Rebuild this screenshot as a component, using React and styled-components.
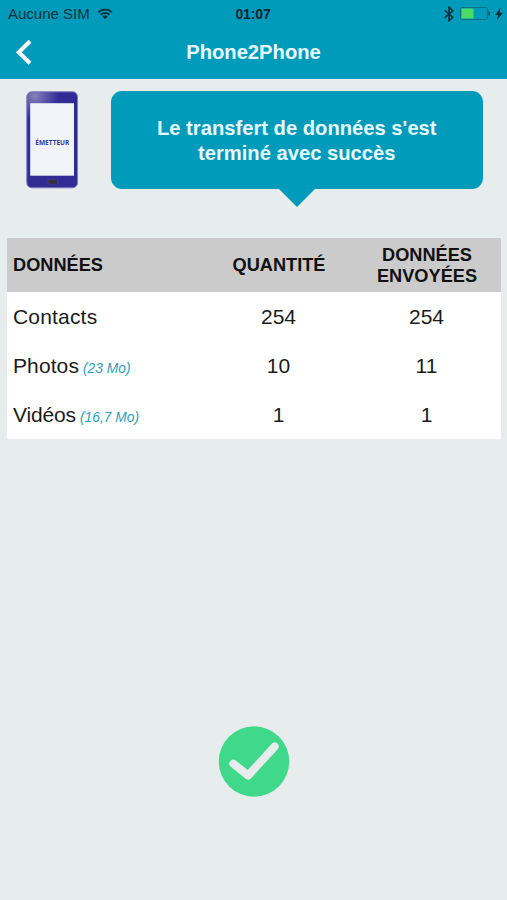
import React from 'react';
import styled, { createGlobalStyle } from 'styled-components';

const GlobalStyle = createGlobalStyle`
  body {
    margin: 0;
    background-color: #e7eded;
    font-family: "Liberation Sans", Arial, sans-serif;
  }
`;

const Screen = styled.div`
  display: flex;
  flex-direction: column;
  height: 900px;
  overflow: hidden;
`;

const Header = styled.header`
  height: 79px;
  background-color: #009bbb;
`;

const StatusBar = styled.div`
  display: grid;
  grid-template-columns: 1fr auto 1fr;
  align-items: center;
  height: 27px;
  padding: 0 5px 0 8px;
  color: #06333f;
`;

const Carrier = styled.div`
  display: flex;
  align-items: center;
  gap: 7px;
  font-size: 15px;
`;

const Clock = styled.div`
  margin-right: 4px;
  color: #052833;
  font-size: 14px;
  font-weight: bold;
  letter-spacing: -0.15px;
`;

const StatusIcons = styled.div`
  display: flex;
  align-items: center;
  justify-content: flex-end;
  gap: 6px;
`;

const NavBar = styled.div`
  display: grid;
  grid-template-columns: 48px 1fr 48px;
  align-items: center;
  height: 50px;
`;

const BackButton = styled.button`
  display: flex;
  padding: 0 0 0 15px;
  border: none;
  background: none;
`;

const Title = styled.h1`
  margin: 0;
  color: #e6fafe;
  font-size: 20.2px;
  line-height: 24px;
  text-align: center;
`;

const Summary = styled.section`
  display: flex;
  padding: 12px 24px 0 26px;
  height: 147px;
`;

const PhoneDrawing = styled.svg`
  width: 52px;
  height: 98px;
  margin-right: 32.5px;
`;

const BubbleColumn = styled.div`
  display: flex;
  flex: 1;
  flex-direction: column;
  align-items: center;
`;

const Bubble = styled.div`
  display: flex;
  align-items: center;
  justify-content: center;
  width: 100%;
  height: 98px;
  padding-top: 2px;
  box-sizing: border-box;
  border-radius: 11px;
  background-color: #009bbb;
  color: #e6fafe;
  font-size: 20.2px;
  font-weight: bold;
  line-height: 25px;
  text-align: center;
`;

const BubbleTail = styled.div`
  width: 0;
  height: 0;
  border: solid transparent;
  border-width: 18px 18px 0;
  border-top-color: #009bbb;
`;

const Table = styled.table`
  width: 494px;
  margin-left: 7px;
  border-collapse: collapse;
  table-layout: fixed;
  background-color: #fff;
  color: #1b1b1b;
`;

const HeadCell = styled.th`
  width: ${({ $width }) => $width}px;
  height: 54px;
  padding: ${({ $left }) => ($left ? '2px 0 0 6px' : '2px 0 0')};
  box-sizing: border-box;
  background-color: #cbcbcb;
  color: #111;
  font-size: 18.2px;
  line-height: 21.5px;
  text-align: ${({ $left }) => ($left ? 'left' : 'center')};
`;

const Cell = styled.td`
  height: 49px;
  padding: ${({ $left }) => ($left ? '0 0 0 6px' : '0 1px 0 0')};
  box-sizing: border-box;
  font-size: 21px;
  line-height: 24px;
  text-align: ${({ $left }) => ($left ? 'left' : 'center')};
`;

const Label = styled.div`
  display: flex;
  align-items: baseline;
  letter-spacing: ${({ $spacing }) => $spacing || 0}px;
`;

const Size = styled.span`
  margin-left: 4px;
  color: #2b9fb5;
  font-size: 13.8px;
  font-style: italic;
  letter-spacing: 0;
  line-height: 14px;
`;

const Result = styled.div`
  display: flex;
  justify-content: center;
  margin-top: 287px;
`;

const rows = [
  { name: 'Contacts', spacing: 0.18, quantity: 254, sent: 254 },
  { name: 'Photos', spacing: 0.1, size: '(23 Mo)', quantity: 10, sent: 11 },
  { name: 'Vidéos', spacing: -0.15, size: '(16,7 Mo)', quantity: 1, sent: 1 },
];

const WifiIcon = () => (
  <svg width="16" height="12" viewBox="0 0 16 12" fill="none" stroke="#06333f">
    <path d="M1.2 4.2a9.8 9.8 0 0 1 13.6 0" strokeWidth="2" />
    <path d="M3.6 6.8a6.4 6.4 0 0 1 8.8 0" strokeWidth="1.9" />
    <path d="M8 11.2 5.4 8.5a3.8 3.8 0 0 1 5.2 0Z" fill="#06333f" stroke="none" />
  </svg>
);

const BluetoothIcon = () => (
  <svg width="10" height="16" viewBox="0 0 10 16" fill="none" stroke="#06333f" strokeWidth="1.6">
    <path d="M.8 4.3 8.8 11.3 5 14.8V1.2L8.8 4.7.8 11.7" />
  </svg>
);

const BatteryIcon = () => (
  <svg width="30" height="13" viewBox="0 0 30 13">
    <rect x=".5" y=".5" width="27" height="12" rx="1.2" fill="none" stroke="#087187" />
    <rect x="1.5" y="1.5" width="12" height="10" fill="#4bdc67" />
    <path d="M28.5 4.2c1.8.6 1.8 4 0 4.6Z" fill="#06333f" />
  </svg>
);

const BoltIcon = () => (
  <svg width="6" height="12" viewBox="0 0 6 12" overflow="visible">
    <path d="M4.5-.2-1 7h3L1 12 6.9 4.8H3.7Z" fill="#06333f" />
  </svg>
);

const Phone = () => (
  <PhoneDrawing viewBox="0 0 52 98">
    <defs>
      <radialGradient id="shine" gradientUnits="userSpaceOnUse" cx="9" cy="5" r="24">
        <stop offset="0" stopColor="#8683b8" />
        <stop offset=".4" stopColor="#5f5ba9" />
        <stop offset="1" stopColor="#302c94" />
      </radialGradient>
    </defs>
    <rect x=".8" y=".8" width="50.7" height="96" rx="5" fill="url(#shine)" stroke="#7a77c0" />
    <rect x="4.2" y="12.2" width="43.8" height="72.5" fill="#f0f4f8" />
    <rect x="22" y="88.2" width="9.5" height="5" rx="1" fill="#30304a" stroke="#4d4992" strokeWidth=".5" />
    <text
      x="26.3"
      y="54.2"
      fill="#3b388c"
      fontFamily="Noto Sans, sans-serif"
      fontSize="6.3"
      fontWeight="bold"
      textAnchor="middle"
      textLength="34"
      lengthAdjust="spacingAndGlyphs"
    >
      ÉMETTEUR
    </text>
  </PhoneDrawing>
);

const App = () => (
  <Screen>
    <GlobalStyle />
    <Header>
      <StatusBar>
        <Carrier>
          Aucune SIM
          <WifiIcon />
        </Carrier>
        <Clock>01:07</Clock>
        <StatusIcons>
          <BluetoothIcon />
          <BatteryIcon />
          <BoltIcon />
        </StatusIcons>
      </StatusBar>
      <NavBar>
        <BackButton aria-label="Retour">
          <svg width="18" height="28" viewBox="0 0 18 28" fill="none">
            <path d="M15 3.3 3.8 14.3 15 25.2" stroke="#fff" strokeWidth="4" />
          </svg>
        </BackButton>
        <Title>Phone2Phone</Title>
      </NavBar>
    </Header>
    <Summary>
      <Phone />
      <BubbleColumn>
        <Bubble>
          Le transfert de données s&#39;est
          <br />
          terminé avec succès
        </Bubble>
        <BubbleTail />
      </BubbleColumn>
    </Summary>
    <main>
      <Table>
        <thead>
          <tr>
            <HeadCell $left $width={198}>DONNÉES</HeadCell>
            <HeadCell $width={148}>QUANTITÉ</HeadCell>
            <HeadCell $width={148}>
              DONNÉES
              <br />
              ENVOYÉES
            </HeadCell>
          </tr>
        </thead>
        <tbody>
          {rows.map((row) => (
            <tr key={row.name}>
              <Cell $left>
                <Label $spacing={row.spacing}>
                  {row.name}
                  {row.size && <Size>{row.size}</Size>}
                </Label>
              </Cell>
              <Cell>{row.quantity}</Cell>
              <Cell>{row.sent}</Cell>
            </tr>
          ))}
        </tbody>
      </Table>
      <Result>
        <svg width="72" height="72" viewBox="0 0 72 72" fill="none">
          <circle cx="36" cy="35.5" r="35.2" fill="#40d88a" />
          <path
            d="M15.3 37.7 30.2 49.5 56.7 20.5"
            stroke="#e7eded"
            strokeWidth="8"
            strokeLinecap="round"
            strokeLinejoin="round"
          />
        </svg>
      </Result>
    </main>
  </Screen>
);

export default App;
